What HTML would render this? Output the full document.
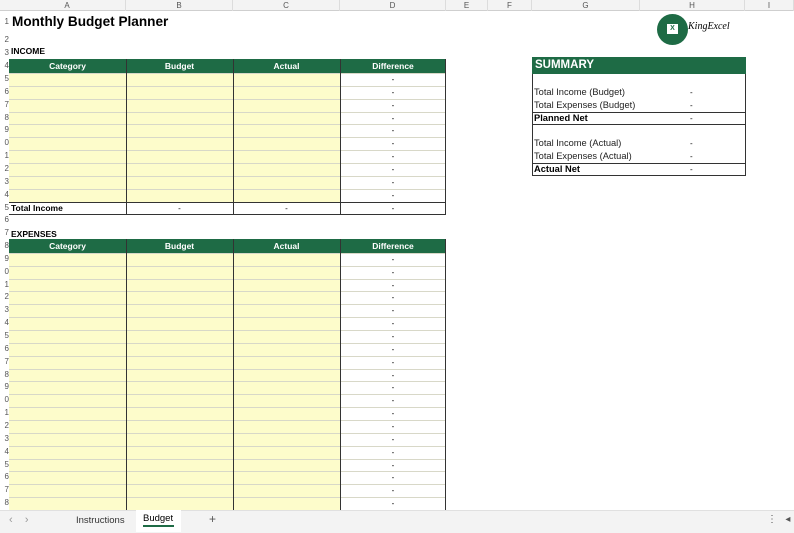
<!DOCTYPE html>
<html><head><meta charset="utf-8"><style>
body{margin:0;width:794px;height:533px;overflow:hidden;background:#fff;font-family:"Liberation Sans",Calibri,sans-serif;position:relative}
div{box-sizing:border-box}
.a{position:absolute}
.ch{position:absolute;top:0;height:11px;font-size:8px;color:#555;text-align:center;line-height:11px;border-right:1px solid #dcdcdc}
.rh{position:absolute;left:0;width:9px;font-size:8px;color:#555;text-align:right;overflow:hidden}
.t{position:absolute;font-size:9px;white-space:nowrap}
.c{height:13px;line-height:13px}
</style></head><body>
<div class="a" style="left:0;top:0;width:794px;height:11px;background:#f3f3f3;border-bottom:1px solid #cfcfcf"></div>
<div id="g"></div>
<div class="t" style="left:12px;top:14px;font-size:13.6px;font-weight:bold">Monthly Budget Planner</div>
<div class="t c" style="left:11px;top:45px;font-size:8.5px;font-weight:bold">INCOME</div>
<div class="t c" style="left:11px;top:228px;font-size:8.5px;font-weight:bold">EXPENSES</div>
<!-- logo -->
<div class="a" style="left:657px;top:14px;width:31px;height:31px;border-radius:50%;background:#1e6b45"></div>
<div class="a" style="left:667px;top:24px;width:11px;height:10px;background:#fff;font-size:7px;color:#1e6b45;text-align:center;line-height:10px;font-weight:bold">X</div>
<div class="t" style="left:688px;top:21px;font-size:10px;font-style:italic;font-family:'Liberation Serif',serif">KingExcel</div>
<!-- tab bar -->
<div class="a" style="left:0;top:510px;width:794px;height:23px;background:#f3f3f3;border-top:1px solid #e0e0e0"></div>
<div class="t" style="left:9px;top:514px;font-size:11px;color:#999">‹&nbsp;&nbsp;&nbsp;&nbsp;›</div>
<div class="t" style="left:76px;top:515px;font-size:9.5px;color:#333">Instructions</div>
<div class="a" style="left:136px;top:510px;width:45px;height:22px;background:#fff"></div>
<div class="t" style="left:143px;top:513px;font-size:9.5px;color:#000">Budget</div>
<div class="a" style="left:143px;top:525px;width:31px;height:1.5px;background:#1e6b45"></div>
<div class="t" style="left:209px;top:512px;font-size:12px;color:#555">+</div>
<div class="t" style="left:767px;top:514px;font-size:10px;color:#555">⋮&nbsp;&nbsp;&nbsp;◂</div>
<script>
(function(){
var g=document.getElementById('g'),h='';
var cols=[['A',9,126],['B',126,233],['C',233,340],['D',340,446],['E',446,488],['F',488,532],['G',532,640],['H',640,745],['I',745,794]];
cols.forEach(function(c){h+='<div class="ch" style="left:'+c[1]+'px;width:'+(c[2]-c[1])+'px">'+c[0]+'</div>'});
function ry(n){return 73+(n-5)*12.85}
var rows={1:[11,33],2:[33,46],3:[46,59],4:[59,73]};
for(var n=1;n<=38;n++){var t=rows[n]?rows[n][0]:ry(n),b=rows[n]?rows[n][1]:ry(n+1);
h+='<div class="rh" style="top:'+t+'px;height:'+(b-t)+'px;line-height:'+(b-t)+'px">'+(n%10)+'</div>';}
function table(hdrRow,first,last,total){
 var y0=ry(hdrRow);
 h+='<div class="a" style="left:9px;top:'+(y0-1)+'px;width:437px;height:14px;background:#1e6b45"></div>';
 ['Category','Budget','Actual','Difference'].forEach(function(s,i){var c=cols[i];h+='<div class="t c" style="left:'+c[1]+'px;width:'+(c[2]-c[1])+'px;text-align:center;top:'+y0+'px;color:#fff;font-weight:bold;font-size:8.5px">'+s+'</div>'});
 var yt=ry(first),yb=ry(last+1);
 h+='<div class="a" style="left:9px;top:'+yt+'px;width:331px;height:'+(yb-yt)+'px;background:#fdfccb"></div>';
 for(var r=first;r<=last;r++){var y=ry(r);
  h+='<div class="a" style="left:9px;top:'+y+'px;width:437px;height:1px;background:#d8d8c8"></div>';
  h+='<div class="t c" style="left:340px;width:106px;text-align:center;top:'+y+'px;font-size:8px">-</div>';}
 var hh=(yb-y0+1+(total?13:0));
 [126,233,340,445].forEach(function(x){h+='<div class="a" style="left:'+x+'px;top:'+(y0-1)+'px;width:1px;height:'+hh+'px;background:#333"></div>'});
 if(total){h+='<div class="a" style="left:9px;top:'+yb+'px;width:437px;height:13px;border-top:1px solid #333;border-bottom:1px solid #333"></div>';
  h+='<div class="t c" style="left:11px;top:'+yb+'px;font-weight:bold;font-size:8.5px">Total Income</div>';
  for(var i=1;i<4;i++){var c=cols[i];h+='<div class="t c" style="left:'+c[1]+'px;width:'+(c[2]-c[1])+'px;text-align:center;top:'+yb+'px;font-size:8px">-</div>'}}
}
table(4,5,14,true);
table(18,19,38,false);
h+='<div class="a" style="left:532px;top:57px;width:214px;height:119px;border:1px solid #333"></div>';
h+='<div class="a" style="left:532px;top:57px;width:214px;height:17px;background:#1e6b45"></div>';
h+='<div class="t" style="left:535px;top:57px;height:17px;line-height:17px;color:#fff;font-weight:bold;font-size:11.5px">SUMMARY</div>';
var s=[[6,'Total Income (Budget)',0],[7,'Total Expenses (Budget)',0],[8,'Planned Net',1],[10,'Total Income (Actual)',0],[11,'Total Expenses (Actual)',0],[12,'Actual Net',1]];
s.forEach(function(r){var y=ry(r[0]);h+='<div class="t c" style="left:534px;top:'+y+'px;font-size:9.3px;'+(r[2]?'font-weight:bold':'color:#222')+'">'+r[1]+'</div><div class="t c" style="left:690px;top:'+y+'px;font-size:8px">-</div>';
 if(r[2])h+='<div class="a" style="left:532px;top:'+y+'px;width:214px;height:13px;border-top:1px solid #333;border-bottom:1px solid #333"></div>';});
g.innerHTML=h;
})();
</script>
</body></html>
